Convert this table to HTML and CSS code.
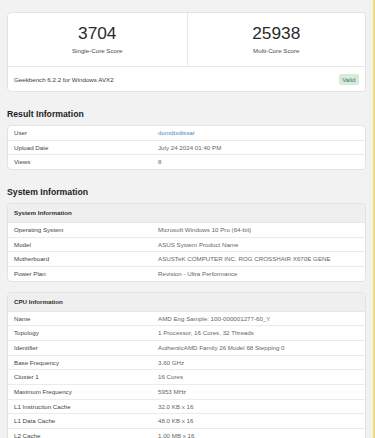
FILE: index.html
```html
<!DOCTYPE html>
<html>
<head>
<meta charset="utf-8">
<link rel="stylesheet" href="styles.css">
</head>
<body>
<div class="page">
  <div class="card">
    <div class="scores">
      <div class="score">
        <div class="score-num">3704</div>
        <div class="score-label">Single-Core Score</div>
      </div>
      <div class="score">
        <div class="score-num">25938</div>
        <div class="score-label">Multi-Core Score</div>
      </div>
    </div>
    <div class="score-foot">
      <span>Geekbench 6.2.2 for Windows AVX2</span>
      <span class="badge">Valid</span>
    </div>
  </div>

  <h2 class="section-title">Result Information</h2>
  <div class="card">
    <div class="row"><span class="label">User</span><span class="value link">domdtxdissar</span></div>
    <div class="row"><span class="label">Upload Date</span><span class="value">July 24 2024 01:40 PM</span></div>
    <div class="row"><span class="label">Views</span><span class="value">8</span></div>
  </div>

  <h2 class="section-title">System Information</h2>
  <div class="card">
    <div class="card-head">System Information</div>
    <div class="row"><span class="label">Operating System</span><span class="value">Microsoft Windows 10 Pro (64-bit)</span></div>
    <div class="row"><span class="label">Model</span><span class="value">ASUS System Product Name</span></div>
    <div class="row"><span class="label">Motherboard</span><span class="value">ASUSTeK COMPUTER INC. ROG CROSSHAIR X670E GENE</span></div>
    <div class="row"><span class="label">Power Plan</span><span class="value">Revision - Ultra Performance</span></div>
  </div>

  <div class="card gap">
    <div class="card-head">CPU Information</div>
    <div class="row"><span class="label">Name</span><span class="value">AMD Eng Sample: 100-000001277-60_Y</span></div>
    <div class="row"><span class="label">Topology</span><span class="value">1 Processor, 16 Cores, 32 Threads</span></div>
    <div class="row"><span class="label">Identifier</span><span class="value">AuthenticAMD Family 26 Model 68 Stepping 0</span></div>
    <div class="row"><span class="label">Base Frequency</span><span class="value">3.60 GHz</span></div>
    <div class="row"><span class="label">Cluster 1</span><span class="value">16 Cores</span></div>
    <div class="row"><span class="label">Maximum Frequency</span><span class="value">5953 MHz</span></div>
    <div class="row"><span class="label">L1 Instruction Cache</span><span class="value">32.0 KB x 16</span></div>
    <div class="row"><span class="label">L1 Data Cache</span><span class="value">48.0 KB x 16</span></div>
    <div class="row"><span class="label">L2 Cache</span><span class="value">1.00 MB x 16</span></div>
  </div>
</div>
</body>
</html>
```
FILE: styles.css
```css
html, body {
  margin: 0;
  padding: 0;
  overflow: hidden;
  background: #f2f2f2;
}
body {
  font-family: "Liberation Sans", Arial, sans-serif;
  font-size: 6.2px;
  color: #3a3a3a;
}
.page {
  box-sizing: border-box;
  width: 375px;
  min-height: 438px;
  padding: 12px 7px 0 7px;
  border-right: 2px solid #f3dc78;
}
.card {
  background: #fff;
  border: 1px solid #e3e3e3;
  border-radius: 4px;
  overflow: hidden;
}
.card.gap {
  margin-top: 10px;
}
.scores {
  display: grid;
  grid-template-columns: 1fr 1fr;
  border-bottom: 1px solid #e8e8e8;
}
.score {
  text-align: center;
  padding: 10px 0 11px;
}
.score + .score {
  border-left: 1px solid #e8e8e8;
}
.score-num {
  font-size: 17.3px;
  line-height: 20px;
  color: #2a2a2a;
}
.score-label {
  margin-top: 4px;
  line-height: 8px;
  color: #4a4a4a;
}
.score-foot {
  display: flex;
  justify-content: space-between;
  align-items: center;
  height: 24px;
  padding: 0 6px;
  color: #3a3a3a;
}
.badge {
  background: #d4edda;
  color: #4f6f55;
  height: 11px;
  line-height: 11px;
  padding: 0 3.5px;
  border-radius: 2px;
}
.section-title {
  margin: 17px 0 6px;
  font-size: 8.7px;
  line-height: 10px;
  font-weight: bold;
  color: #222;
}
.card-head {
  height: 18px;
  line-height: 18px;
  padding: 0 6px;
  background: #efefef;
  font-weight: bold;
  color: #2e2e2e;
  border-bottom: 1px solid #e6e6e6;
}
.row {
  display: grid;
  grid-template-columns: 144px 1fr;
  padding: 0 6px;
  line-height: 13.65px;
  white-space: nowrap;
}
.row + .row {
  border-top: 1px solid #ebebeb;
}
.label {
  color: #444;
}
.value {
  color: #666;
}
.value.link {
  color: #3b8ed0;
}
```
